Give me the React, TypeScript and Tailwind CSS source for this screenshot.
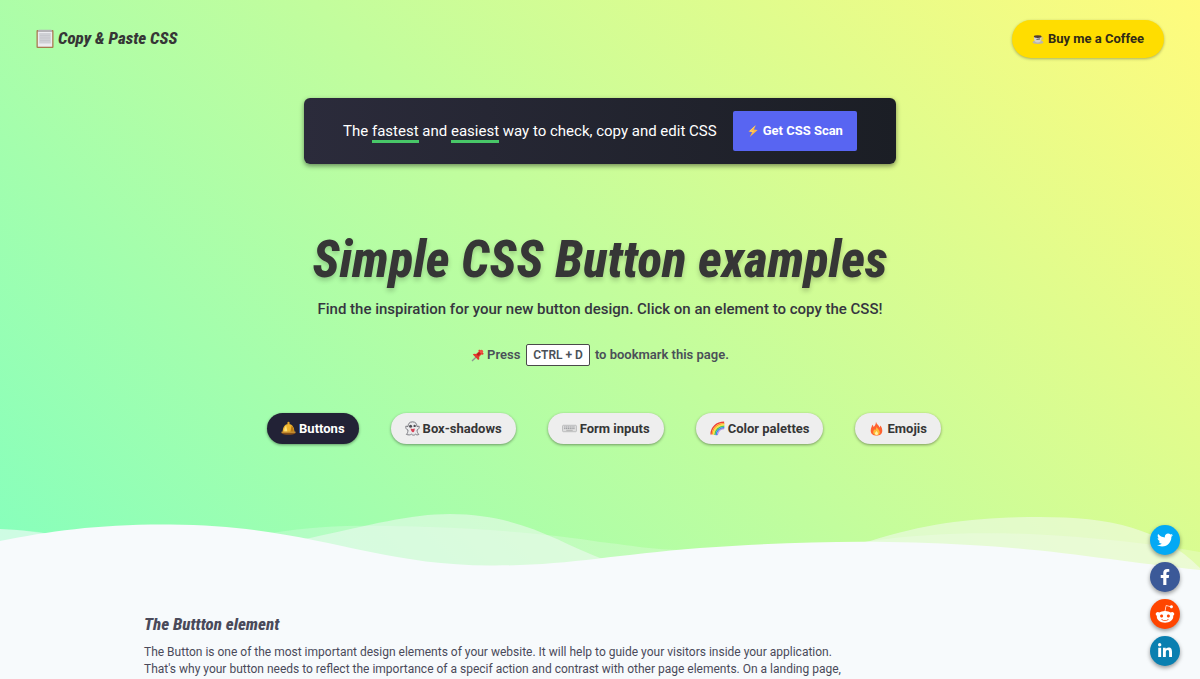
import type { ReactNode } from "react";
import { FaTwitter, FaFacebookF, FaRedditAlien, FaLinkedinIn } from "react-icons/fa";

const display = "font-['Roboto_Condensed','Liberation_Sans_Narrow',sans-serif] font-extrabold italic";

function Clipboard() {
  return (
    <svg viewBox="0 0 18 20" className="h-5 w-[18px] shrink-0" aria-hidden="true">
      <rect x="0.5" y="1" width="17" height="18" rx="1" fill="#a87b50" />
      <rect x="1.8" y="2.5" width="14.4" height="15.2" fill="#ececf0" />
      <rect x="3.200" y="4" width="11.600" height="10.5" fill="#cfd0d5" />
      <rect x="2" y="0.8" width="14" height="2.2" rx="1" fill="#b4b2b6" />
      <path d="M4 6.5h10M4 9h10M4 11.5h10" stroke="#c3c4cb" strokeWidth="0.7" />
    </svg>
  );
}

function Coffee() {
  return (
    <svg viewBox="0 0 12 12" className="size-3 shrink-0" aria-hidden="true">
      <ellipse cx="6" cy="9.2" rx="5.4" ry="1.7" fill="#b9b4b0" />
      <path d="M2 3.4h7.4v2.4c0 2.4-1.3 3.8-3.7 3.8S2 8.200 2 5.800z" fill="#d6d2cf" />
      <path d="M9.300 4.200c2.300-.2 2 3-.8 3" fill="none" stroke="#b9b6b4" />
      <ellipse cx="5.700" cy="3.600" rx="3.900" ry="1.400" fill="#513b32" />
      <path d="M4.500 6.500l3.500-.6" stroke="#666" strokeWidth="1.200" />
    </svg>
  );
}

function Bolt() {
  return (
    <svg viewBox="0 0 12 14" className="h-3.5 w-3 shrink-0" aria-hidden="true">
      <path d="M8.800 1L1.500 7.600l3.600.7L2.800 13l7.900-6.900-3.800-.6z" fill="#fdb747" />
      <path d="M7.800 2.400L3.200 7l3.300.5" fill="none" stroke="#ffdb78" strokeWidth="0.8" />
    </svg>
  );
}

function Pin() {
  return (
    <svg viewBox="0 0 14 14" className="size-3.5 shrink-0" aria-hidden="true">
      <path d="M5.500 8.700L1 13" stroke="#8d9591" strokeWidth="1.300" />
      <path d="M8.200 1.500l4.600 4.300-1 .9-1.500-.3-2.200 2.500.2 2-1.100 1.100L1.800 6.600 3 5.700l2.100.2 2.700-2.500-.4-1.200z" fill="#e23a2e" />
      <path d="M5.700 6.500l3-2.900 1.400 1.300-2.900 3z" fill="#b81f1d" />
      <circle cx="10.300" cy="3.600" r="1.900" fill="#f05345" />
    </svg>
  );
}

function Bell() {
  return (
    <svg viewBox="0 0 14 14" className="size-[15px] shrink-0" aria-hidden="true">
      <rect x="6" y="0.700" width="2" height="3" rx="1" fill="#e5a62b" />
      <path d="M1.500 10.500C1.500 5.800 3.600 2.800 7 2.800s5.500 3 5.500 7.700z" fill="#f0b52e" />
      <path d="M4.800 4.200C3.200 5.800 3 8 3 10h3z" fill="#ffe17a" />
      <path d="M10 4.300c1.700 1.600 2 3.800 2 6H8.700z" fill="#b77714" />
      <path d="M.5 10h13v1.400c-2.500 2-10.500 2-13 0z" fill="#8a5219" />
      <path d="M.5 10h13v.8H.5z" fill="#efb944" />
    </svg>
  );
}

function Ghost() {
  return (
    <svg viewBox="0 0 14 14" className="size-[15px] shrink-0" aria-hidden="true">
      <path d="M7 .8c3 0 4.200 2 4.200 4.400l2-.4c.4 1.800-.7 3.200-2 3.700.1 1.800.8 3 1.700 4.100-1.300.6-2.300.4-3-.3-1 1.200-2.900 1.200-3.900 0-1 .8-2.700 1-4.700.2 1-.9 1.400-2.200 1.500-4C1.300 8 .4 6.700.8 4.800l2 .4C2.800 2.800 4 .8 7 .8z" fill="#e9e9eb" stroke="#77777d" strokeWidth="0.900" />
      <circle cx="5.200" cy="4.800" r="1.400" fill="#4d4d53" />
      <circle cx="9" cy="4.600" r="1.100" fill="#4d4d53" />
      <path d="M5.200 7c1.400.6 2.500.6 3.900 0-.2 2.300-.5 3.600-1.600 3.600S5.800 9.300 5.200 7z" fill="#d64256" />
    </svg>
  );
}

function Keyboard() {
  return (
    <svg viewBox="0 0 14 14" className="size-[15px] shrink-0" aria-hidden="true">
      <rect x="0.500" y="4" width="13" height="6" rx="0.800" fill="#dedede" stroke="#b0b1b3" strokeWidth="0.700" />
      <path d="M2 5.600h10M2 7.100h10" stroke="#95979b" strokeWidth="0.900" strokeDasharray="1.200 .5" />
      <path d="M4 8.700h6" stroke="#aaa" strokeWidth="0.800" />
    </svg>
  );
}

function Rainbow() {
  return (
    <svg viewBox="0 0 14 14" className="size-[15px] shrink-0" fill="none" strokeWidth="1.300" aria-hidden="true">
      <path d="M1 12.500C1 5.800 6 1.200 13.200 1.200" stroke="#ec4037" />
      <path d="M2.200 12.700C2.200 6.800 6.800 2.400 13.400 2.400" stroke="#ff9c26" />
      <path d="M3.400 12.900C3.400 7.800 7.500 3.600 13.400 3.600" stroke="#ffe239" />
      <path d="M4.600 13.100C4.600 8.800 8.300 4.800 13.400 4.800" stroke="#51c650" />
      <path d="M5.800 13.200C5.800 9.600 9 6 13.400 6" stroke="#3a8bf0" />
      <path d="M7 13.200C7 10.500 9.500 7.200 13.200 7.200" stroke="#9b62d4" strokeWidth="0.800" />
    </svg>
  );
}

function Fire() {
  return (
    <svg viewBox="0 0 14 14" className="size-[15px] shrink-0" aria-hidden="true">
      <path d="M6.500.6c.4 2.500 3 3.300 3.300 5.400.5-.4.700-1 .6-1.700 1.300 1.300 2 3 2 4.700 0 2.900-2.200 4.600-5.400 4.600S1.600 11.800 1.600 9c0-2.300 1.100-3.700 1.400-5.500.8.5 1.200 1.200 1.300 2C5.700 4.300 6.500 2.500 6.500.6z" fill="#ff6230" />
      <path d="M7 5c0 1.800 3 3.300 3 5.500 0 1.700-1.200 2.700-3 2.700s-3.100-1-3.100-2.600c0-1.300.7-2 .9-3 .5.300.7.700.8 1.100C6.600 7.800 7 6.500 7 5z" fill="#ffbc38" />
      <path d="M7 9c.2 1 1.400 1.400 1.400 2.600 0 .8-.5 1.400-1.400 1.400s-1.500-.5-1.500-1.300C5.500 10.500 6.700 10.200 7 9z" fill="#fff2a8" />
    </svg>
  );
}

function Waves() {
  return (
    <svg viewBox="0 0 1200 80" preserveAspectRatio="none" className="block h-20 w-full" aria-hidden="true">
      <path
        d="M0 29C20 30 35 31 50 34C130 46 190 42 270 33C330 24 370 25 430 27C490 29 560 35 600 42C630 45 650 50 690 50C760 50 830 48 870 41C920 34 970 32 1030 34C1090 37 1150 43 1200 52V80H0Z"
        fill="#f7fafc"
        fillOpacity="0.250"
      />
      <path
        d="M0 29C25 30 40 33 60 35C130 46 230 50 310 38C370 25 410 14 450 14C520 14 560 43 600 58C680 66 790 58 870 41C930 22 980 17 1040 17C1110 17 1160 28 1200 68V80H0Z"
        fill="#f7fafc"
        fillOpacity="0.500"
      />
      <path
        d="M0 41C50 31 100 24 170 24.500C310 25 370 65 490 65.500C565 66 610 55 700 48C790 42 870 39 970 45C1060 50 1120 62 1200 70V80H0Z"
        fill="#f7fafc"
      />
    </svg>
  );
}

const tabs: { label: string; icon: ReactNode; active?: boolean }[] = [
  { label: "Buttons", icon: <Bell />, active: true },
  { label: "Box-shadows", icon: <Ghost /> },
  { label: "Form inputs", icon: <Keyboard /> },
  { label: "Color palettes", icon: <Rainbow /> },
  { label: "Emojis", icon: <Fire /> },
];

const socials = [
  { name: "Twitter", icon: <FaTwitter />, color: "bg-[#03a9f4]" },
  { name: "Facebook", icon: <FaFacebookF />, color: "bg-[#3b5998]" },
  { name: "Reddit", icon: <FaRedditAlien className="size-5" />, color: "bg-[#ff4500]" },
  { name: "LinkedIn", icon: <FaLinkedinIn />, color: "bg-[#0a7fb0]" },
];

export default function App() {
  return (
    <div className="min-h-screen bg-[#f7fafc] font-[Roboto,sans-serif] text-[#363640]">
      <header className="bg-[linear-gradient(45deg,#85ffbd,#fffb7d)]">
        <nav className="flex items-center justify-between px-9 pt-5">
          <a href="#" className={`${display} flex items-center gap-1 text-[17px] text-[#363636]`}>
            <Clipboard />
            Copy &amp; Paste CSS
          </a>
          <a
            href="#"
            className="flex h-[38px] items-center gap-1 rounded-full bg-[#ffdd00] px-5 text-[13px] font-bold text-[#302a17] shadow-[0_1px_3px_rgba(0,0,0,0.3)]"
          >
            <Coffee />
            Buy me a Coffee
          </a>
        </nav>

        <div className="mx-auto mt-10 flex h-[66px] w-[592px] max-w-full items-center justify-center gap-4 rounded-md bg-linear-to-r from-[#2b2b3b] to-[#1b1e25] text-white shadow-[0_2px_5px_rgba(0,0,0,0.45)]">
          <p className="text-[15px]">
            The <span className="border-b-3 border-[#48c768]">fastest</span> and{" "}
            <span className="border-b-3 border-[#48c768]">easiest</span> way to check, copy and edit CSS
          </p>
          <a href="#" className="flex h-10 items-center gap-1 rounded-xs bg-[#5865f2] px-3.5 text-[13px] font-bold">
            <Bolt />
            Get CSS Scan
          </a>
        </div>

        <div className="mt-[66px] text-center">
          <h1 className={`${display} text-[51px] leading-[60px] text-[#363636] [text-shadow:0_3px_5px_rgba(0,0,0,0.2)]`}>
            Simple CSS Button examples
          </h1>
          <p className="mt-[7px] text-[15px] leading-6 font-medium">
            Find the inspiration for your new button design. Click on an element to copy the CSS!
          </p>
          <p className="mt-[23px] flex items-center justify-center text-[13px] font-semibold text-[#4a5058]">
            <Pin />
            <span className="ml-0.5">Press</span>
            <kbd className="ml-1.5 mr-[5px] rounded-xs border border-[#4a4a4a] bg-white px-1.5 font-[Roboto,sans-serif] text-xs leading-5">
              CTRL + D
            </kbd>
            to bookmark this page.
          </p>
        </div>

        <div className="mt-[47px] flex justify-center gap-8 pl-2">
          {tabs.map((tab) => (
            <button
              key={tab.label}
              type="button"
              className={`flex h-[31px] items-center gap-[3px] rounded-full px-3.5 text-[13px] font-bold shadow-[0_1px_3px_rgba(0,0,0,0.4)] ${
                tab.active ? "bg-[#222236] text-white" : "bg-[#eeeeee] text-[#363636]"
              }`}
            >
              {tab.icon}
              {tab.label}
            </button>
          ))}
        </div>

        <div className="mt-14">
          <Waves />
        </div>
      </header>

      <main className="px-36 pt-8">
        <h2 className={`${display} text-[17px] leading-6 text-[#4a4a5a]`}>The Buttton element</h2>
        <p className="mt-2 max-w-[704px] text-xs leading-[17px] text-[#4a4a5a]">
          The Button is one of the most important design elements of your website. It will help to guide your visitors inside your application.
          That's why your button needs to reflect the importance of a specif action and contrast with other page elements. On a landing page,
        </p>
      </main>

      <aside className="fixed right-5 bottom-[13px] flex flex-col gap-[7px]" aria-label="Share">
        {socials.map((s) => (
          <a
            key={s.name}
            href="#"
            aria-label={s.name}
            className={`flex size-[30px] items-center justify-center rounded-full text-white shadow-[0_2px_4px_rgba(0,0,0,0.4)] ${s.color}`}
          >
            {s.icon}
          </a>
        ))}
      </aside>
    </div>
  );
}
